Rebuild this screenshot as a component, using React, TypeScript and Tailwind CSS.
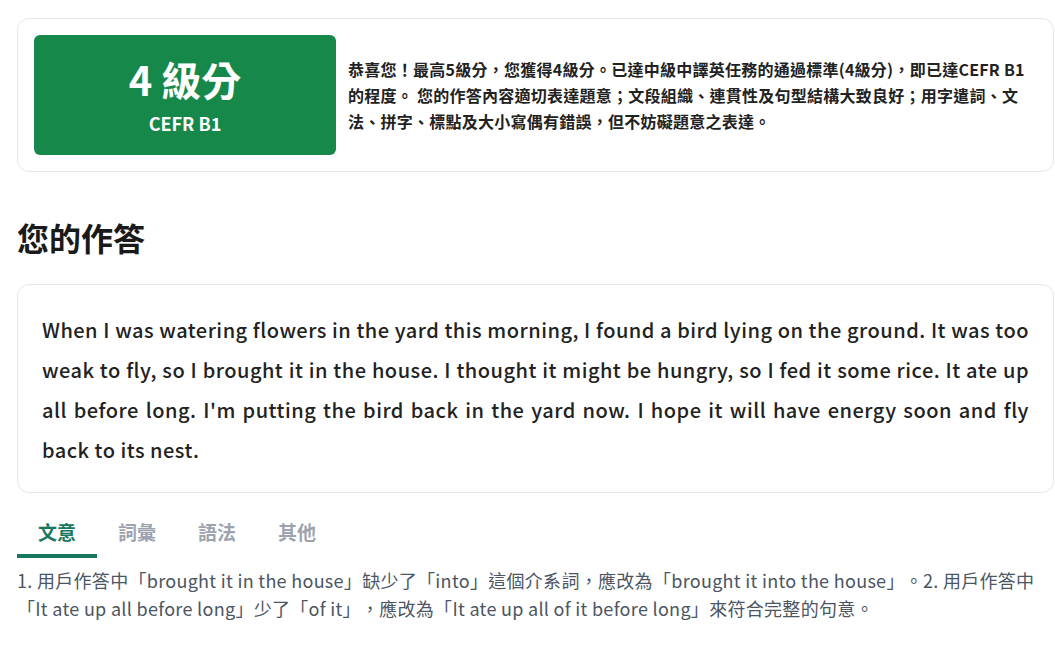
const tabs = ['文意', '詞彙', '語法', '其他'];

export default function App() {
  return (
    <div
      className="min-h-screen bg-white pl-[17px] pr-px pt-[18px] text-[#1f1f1f] [text-spacing-trim:space-all]"
      style={{ fontFamily: '"Noto Sans CJK TC", "Noto Sans", sans-serif' }}
    >
      {/* Score card */}
      <div className="flex items-center gap-3 rounded-xl border border-[#e5e7eb] p-4 pr-7">
        <div className="flex h-[120px] w-[302px] shrink-0 flex-col items-center justify-center rounded-md bg-[#15884a] text-white">
          <div className="text-[40px] font-bold leading-[48px]">4 級分</div>
          <div className="mt-[8px] text-[18px] font-bold leading-6">CEFR B1</div>
        </div>
        <p className="text-[16px] font-bold leading-[26px] tracking-[0.25px] text-[#222]">
          恭喜您！最高5級分，您獲得4級分。已達中級中譯英任務的通過標準(4級分)，即已達CEFR B1的程度。 您的作答內容適切表達題意；文段組織、連貫性及句型結構大致良好；用字遣詞、文法、拼字、標點及大小寫偶有錯誤，但不妨礙題意之表達。
        </p>
      </div>

      {/* Answer */}
      <h2 className="mt-[42px] text-[32px] font-bold leading-[46px] text-[#1a1a1a]">您的作答</h2>
      <div className="mt-[24px] rounded-xl border border-[#e5e7eb] px-6 pb-[22px] pt-[25px]">
        <p className="text-justify text-[20px] font-medium leading-[40px] tracking-[0.5px] text-[#222]">
          When I was watering flowers in the yard this morning, I found a bird lying on the ground. It was too weak to fly, so I brought it in the house. I thought it might be hungry, so I fed it some rice. It ate up all before long. I'm putting the bird back in the yard now. I hope it will have energy soon and fly back to its nest.
        </p>
      </div>

      {/* Tabs */}
      <div className="mt-[14px] flex">
        {tabs.map((t, i) => (
          <div
            key={t}
            className={`flex h-[51px] w-[80px] items-center justify-center border-b-4 pt-1 text-[19px] font-bold ${
              i === 0 ? 'border-[#17775f] text-[#17775f]' : 'border-transparent text-[#9ca3af]'
            }`}
          >
            {t}
          </div>
        ))}
      </div>
      <p className="mt-[8px] text-[18px] leading-[28px] tracking-[0.3px] text-[#4b5563]">
        1. 用戶作答中「brought it in the house」缺少了「into」這個介系詞，應改為「brought it into the house」。2. 用戶作答中「It ate up all before long」少了「of it」，應改為「It ate up all of it before long」來符合完整的句意。
      </p>
    </div>
  );
}
